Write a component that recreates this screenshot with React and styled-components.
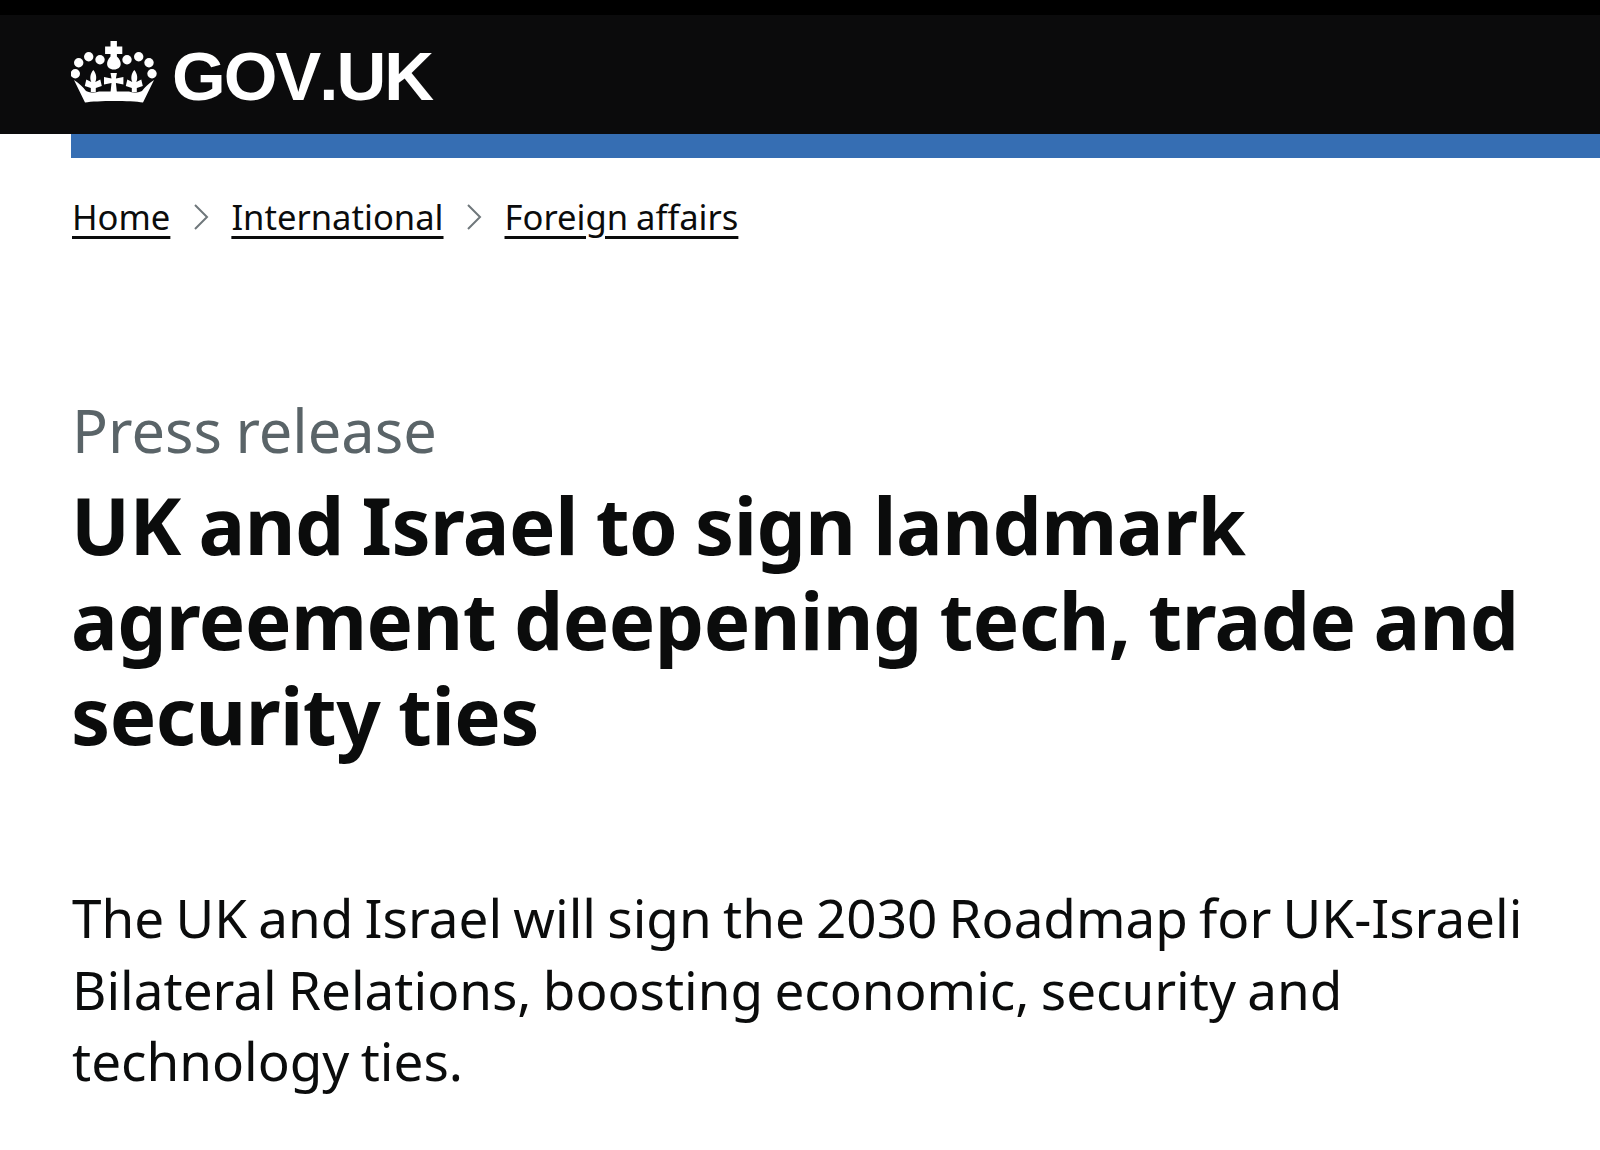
import React from "react";
import styled, { createGlobalStyle } from "styled-components";

const Global = createGlobalStyle`
  html, body { margin: 0; padding: 0; background: #fff; }
  body { font-family: "Noto Sans", "Open Sans", sans-serif; color: #0b0c0c; }
`;
const Page = styled.div`
  width: 1600px;
  height: 1150px;
  overflow: hidden;
  background: #fff;
`;
const TopStrip = styled.div`
  height: 15px;
  background: #000;
`;
const Header = styled.header`
  height: 119px;
  background: #0b0b0c;
  padding-left: 71px;
  display: flex;
  align-items: center;
  gap: 15px;
`;
const CrownMark = styled.svg`
  margin-bottom: 3px;
`;
const Wordmark = styled.span`
  margin-top: 4px;
  font-family: "Liberation Sans", Arial, sans-serif;
  font-weight: 700;
  font-size: 69px;
  line-height: 1;
  color: #fff;
  font-kerning: none;
  letter-spacing: -2px;
`;
const BlueRule = styled.div`
  height: 24px;
  margin-left: 71px;
  background: #366eb3;
`;
const Main = styled.main`
  padding: 0 72px;
`;
const Breadcrumbs = styled.nav`
  display: flex;
  align-items: center;
  gap: 22.5px;
  margin-top: 37px;
  height: 44px;
`;
const Crumb = styled.a`
  font-size: 34.6px;
  line-height: 44px;
  word-spacing: -1px;
  color: #0b0c0c;
  text-decoration: underline;
  text-decoration-thickness: 2.5px;
  text-underline-offset: 6px;
`;
const Caption = styled.div`
  margin-top: 156px;
  font-size: 59.5px;
  line-height: 70px;
  word-spacing: -2px;
  color: #5a6468;
`;
const Title = styled.h1`
  margin: 13px 0 0 -1px;
  font-size: 78px;
  line-height: 95px;
  font-weight: 700;
  letter-spacing: -0.5px;
  word-spacing: -2px;
  color: #0b0c0c;
`;
const Lead = styled.p`
  margin: 119px 0 0;
  font-size: 53px;
  line-height: 71.5px;
  word-spacing: -2.5px;
  color: #0b0c0c;
`;

const Fleur = ({ cx }) => (
  <path
    transform={`translate(${cx} 0)`}
    d="M0 29C3.500 33 3.500 38 2 41L7 38.500L8.500 45L2.500 47L2.500 51L-2.500 51L-2.500 47L-8.500 45L-7 38.500L-2 41C-3.500 38-3.500 33 0 29Z"
  />
);

const Crown = () => (
  <CrownMark width="86" height="64" viewBox="0 0 86 64" fill="#fff" aria-hidden="true">
    <path d="M39.5 0h6.400v5.500h5.400v7.500h-5.400v2.500c3 2.500 3.800 5.500 3.800 7.500 0 3-2.600 5.500-6.800 5.500s-6.800-2.500-6.800-5.500c0-2 .8-5 3.400-7.500V13h-5.400V5.500h5.400z" />
    <circle cx="7.700" cy="21.700" r="4.700" />
    <circle cx="17.700" cy="15.700" r="4.700" />
    <circle cx="29" cy="18.700" r="4.700" />
    <circle cx="56" cy="18.700" r="4.700" />
    <circle cx="67.700" cy="15.700" r="4.700" />
    <circle cx="78" cy="21.700" r="4.700" />
    <circle cx="4.300" cy="32.700" r="4.700" />
    <circle cx="81" cy="32.700" r="4.700" />
    <Fleur cx={22.300} />
    <Fleur cx={63.300} />
    <path d="M39.500 32h6.400l-1 5.500 7.500-1.500v7.500l-7.500-1.500 1 9.500h-6.400l1-9.500-7.500 1.500V36l7.500 1.500z" />
    <path d="M3 39C8 42 12 46 15 50C20 52 24 52 28 50.500L58 50.500C62 52 66 52 71 50C74 46 78 42 83 39L72 61.500C60 59.500 26 59.500 14 61.500Z" />
  </CrownMark>
);

const Chevron = styled.svg`
  fill: none;
  stroke: #6f777b;
  stroke-width: 2;
`;

const Separator = () => (
  <Chevron width="16" height="30" viewBox="0 0 16 30">
    <path d="M2 3l12 12L2 27" />
  </Chevron>
);

export default function App() {
  return (
    <Page>
      <Global />
      <TopStrip />
      <Header>
        <Crown />
        <Wordmark>GOV.UK</Wordmark>
      </Header>
      <BlueRule />
      <Main>
        <Breadcrumbs>
          <Crumb>Home</Crumb>
          <Separator />
          <Crumb>International</Crumb>
          <Separator />
          <Crumb>Foreign affairs</Crumb>
        </Breadcrumbs>
        <Caption>Press release</Caption>
        <Title>UK and Israel to sign landmark agreement deepening tech, trade and security ties</Title>
        <Lead>The UK and Israel will sign the 2030 Roadmap for UK-Israeli Bilateral Relations, boosting economic, security and technology ties.</Lead>
      </Main>
    </Page>
  );
}
